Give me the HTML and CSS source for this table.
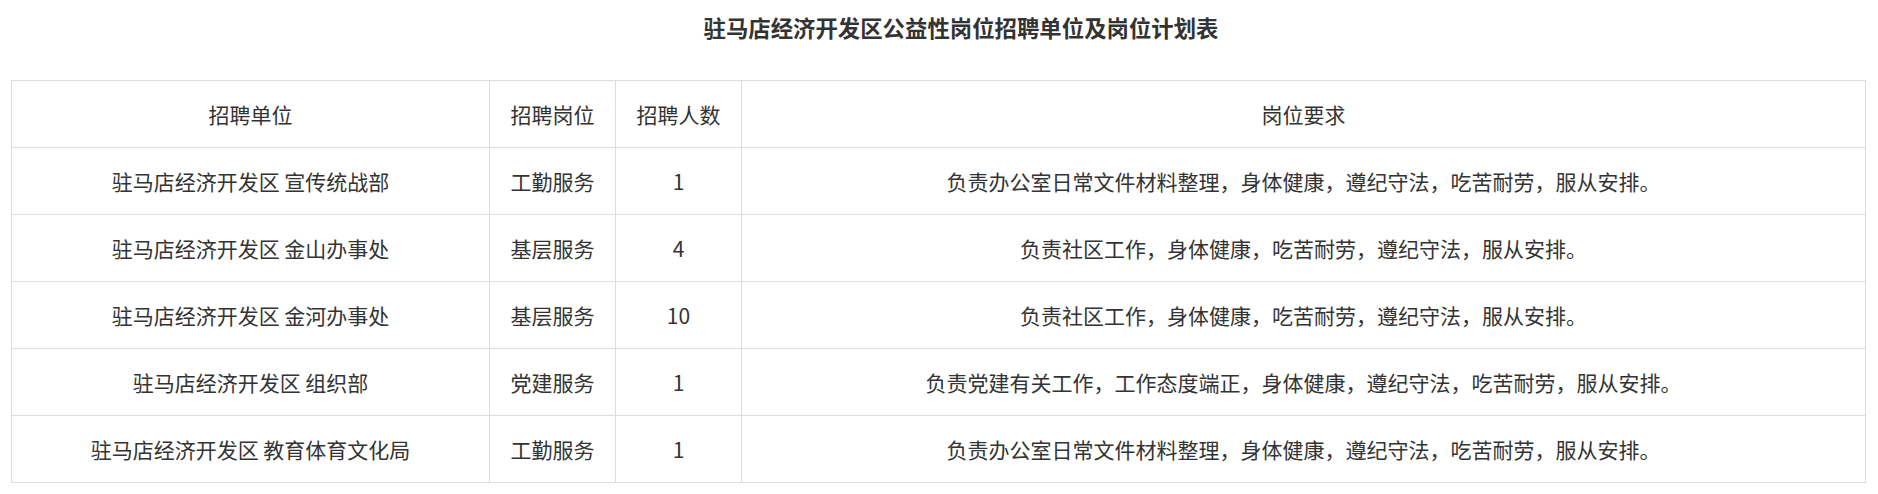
FILE: index.html
```html
<!DOCTYPE html>
<html lang="zh-CN">
<head>
<meta charset="utf-8">
<title>驻马店经济开发区公益性岗位招聘单位及岗位计划表</title>
<link rel="stylesheet" href="styles.css">
</head>
<body>
<h1 class="title">驻马店经济开发区公益性岗位招聘单位及岗位计划表</h1>
<table class="plan">
  <colgroup>
    <col class="c-unit">
    <col class="c-post">
    <col class="c-num">
    <col class="c-req">
  </colgroup>
  <thead>
    <tr><th>招聘单位</th><th>招聘岗位</th><th>招聘人数</th><th>岗位要求</th></tr>
  </thead>
  <tbody>
    <tr><td>驻马店经济开发区 宣传统战部</td><td>工勤服务</td><td>1</td><td>负责办公室日常文件材料整理，身体健康，遵纪守法，吃苦耐劳，服从安排。</td></tr>
    <tr><td>驻马店经济开发区 金山办事处</td><td>基层服务</td><td>4</td><td>负责社区工作，身体健康，吃苦耐劳，遵纪守法，服从安排。</td></tr>
    <tr><td>驻马店经济开发区 金河办事处</td><td>基层服务</td><td>10</td><td>负责社区工作，身体健康，吃苦耐劳，遵纪守法，服从安排。</td></tr>
    <tr><td>驻马店经济开发区 组织部</td><td>党建服务</td><td>1</td><td>负责党建有关工作，工作态度端正，身体健康，遵纪守法，吃苦耐劳，服从安排。</td></tr>
    <tr><td>驻马店经济开发区 教育体育文化局</td><td>工勤服务</td><td>1</td><td>负责办公室日常文件材料整理，身体健康，遵纪守法，吃苦耐劳，服从安排。</td></tr>
  </tbody>
</table>
</body>
</html>
```

FILE: styles.css
```css
html, body {
  margin: 0;
  padding: 0;
  background: #ffffff;
}

body {
  font-family: "Noto Sans CJK SC", "Noto Sans", sans-serif;
  color: #333333;
}

.title {
  margin: 0 0 38px 0;
  padding: 12px 0 0 44px;
  font-size: 22.4px;
  line-height: 30px;
  font-weight: bold;
  text-align: center;
  color: #333333;
}

.plan {
  margin-left: 11px;
  width: 1854px;
  table-layout: fixed;
  border-collapse: collapse;
}

.c-unit { width: 478px; }
.c-post { width: 126px; }
.c-num { width: 126px; }
.c-req { width: 1124px; }

.plan th,
.plan td {
  border: 1px solid #dddddd;
  height: 66px;
  padding: 0;
  font-size: 21px;
  font-weight: normal;
  line-height: 28px;
  text-align: center;
  vertical-align: middle;
  color: #333333;
}
```
